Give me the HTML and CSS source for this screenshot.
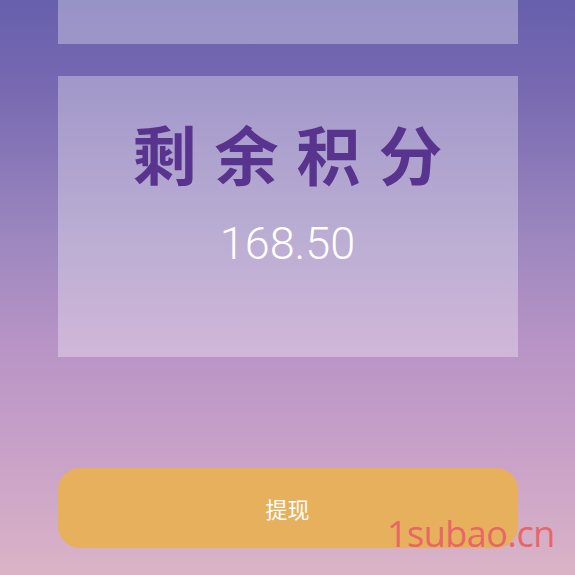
FILE: index.html
```html
<!DOCTYPE html>
<html>
<head>
<meta charset="utf-8">
<link rel="stylesheet" href="styles.css">
</head>
<body>
<div class="page">
  <div class="card card-top"></div>
  <div class="card card-main">
    <div class="title">剩余积分</div>
    <div class="amount">168.50</div>
  </div>
  <div class="btn">提现</div>
  <div class="watermark">1subao.cn</div>
</div>
</body>
</html>
```
FILE: styles.css
```css
html, body { margin: 0; padding: 0; }
body {
  width: 575px; height: 575px; overflow: hidden;
  font-family: "Noto Sans CJK SC", "Liberation Sans", sans-serif;
}
.page {
  position: relative;
  width: 575px; height: 575px;
  background: linear-gradient(to bottom, #6760ad 0%, #7768b1 15%, #9a86be 40%, #b894c6 60%, #caa2c8 80%, #dab4c6 100%);
  display: flex; flex-direction: column; align-items: center;
}
.card {
  width: 460px;
  background: rgba(255,255,255,0.32);
}
.card-top { height: 44px; }
.card-main {
  margin-top: 32px;
  height: 281px;
  display: flex; flex-direction: column; align-items: center;
}
.title {
  margin-top: 36px;
  font-size: 64px; font-weight: 700; color: #58348e;
  letter-spacing: 18px; margin-right: -18px;
  line-height: 80px;
}
.amount {
  margin-top: 27px;
  font-family: "Roboto", "Liberation Sans", sans-serif;
  font-weight: 300;
  font-size: 45px; color: #ffffff; line-height: 50px;
}
.btn {
  margin-top: 111px;
  width: 460px; height: 80px; border-radius: 22px;
  background: #e6b05c; color: #fff;
  display: flex; align-items: center; justify-content: center;
  font-size: 22px;
}
.watermark {
  position: absolute; left: 387px; top: 512px;
  font-family: "Open Sans", "Liberation Sans", sans-serif;
  font-size: 36px; color: #e86668; line-height: 44px;
  letter-spacing: -0.5px;
}
```
